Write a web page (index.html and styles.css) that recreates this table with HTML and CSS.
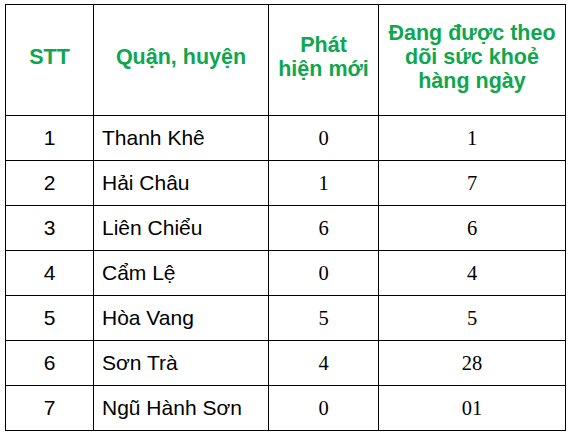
FILE: index.html
```html
<!DOCTYPE html>
<html lang="vi">
<head>
<meta charset="utf-8">
<title>Bảng theo dõi</title>
<link rel="stylesheet" href="styles.css">
</head>
<body>
<table class="stats">
  <colgroup>
    <col class="c-stt">
    <col class="c-name">
    <col class="c-new">
    <col class="c-watch">
  </colgroup>
  <thead>
    <tr class="head-row">
      <th>STT</th>
      <th>Quận, huyện</th>
      <th>Phát<br>hiện mới</th>
      <th>Đang được theo<br>dõi sức khoẻ<br>hàng ngày</th>
    </tr>
  </thead>
  <tbody>
    <tr><td class="idx">1</td><td class="name">Thanh Khê</td><td class="num">0</td><td class="num">1</td></tr>
    <tr><td class="idx">2</td><td class="name">Hải Châu</td><td class="num">1</td><td class="num">7</td></tr>
    <tr><td class="idx">3</td><td class="name">Liên Chiểu</td><td class="num">6</td><td class="num">6</td></tr>
    <tr><td class="idx">4</td><td class="name">Cẩm Lệ</td><td class="num">0</td><td class="num">4</td></tr>
    <tr><td class="idx">5</td><td class="name">Hòa Vang</td><td class="num">5</td><td class="num">5</td></tr>
    <tr><td class="idx">6</td><td class="name">Sơn Trà</td><td class="num">4</td><td class="num">28</td></tr>
    <tr><td class="idx">7</td><td class="name">Ngũ Hành Sơn</td><td class="num">0</td><td class="num">01</td></tr>
  </tbody>
</table>
</body>
</html>
```
FILE: styles.css
```css
html, body {
  margin: 0;
  padding: 0;
  background: #ffffff;
}

body {
  padding: 4px 0 0 5px;
  font-family: "Liberation Sans", Arial, sans-serif;
}

.stats {
  border-collapse: collapse;
  table-layout: fixed;
  width: 560px;
}

.c-stt { width: 88px; }
.c-name { width: 175px; }
.c-new { width: 110px; }
.c-watch { width: 187px; }

.stats th,
.stats td {
  border: 1px solid #000000;
  padding: 0;
  vertical-align: middle;
}

.head-row th {
  height: 104px;
  padding-bottom: 6px;
  color: #0ea64e;
  font-weight: bold;
  font-size: 21.5px;
  line-height: 24px;
  text-align: center;
}

.stats tbody td {
  height: 44px;
  font-size: 21px;
  color: #000000;
}

.idx {
  text-align: center;
}

.stats tbody td.name {
  text-align: left;
  padding-left: 8px;
}

.stats tbody td.num {
  text-align: center;
  font-family: "Liberation Serif", "Times New Roman", serif;
  font-size: 20.5px;
}
```
